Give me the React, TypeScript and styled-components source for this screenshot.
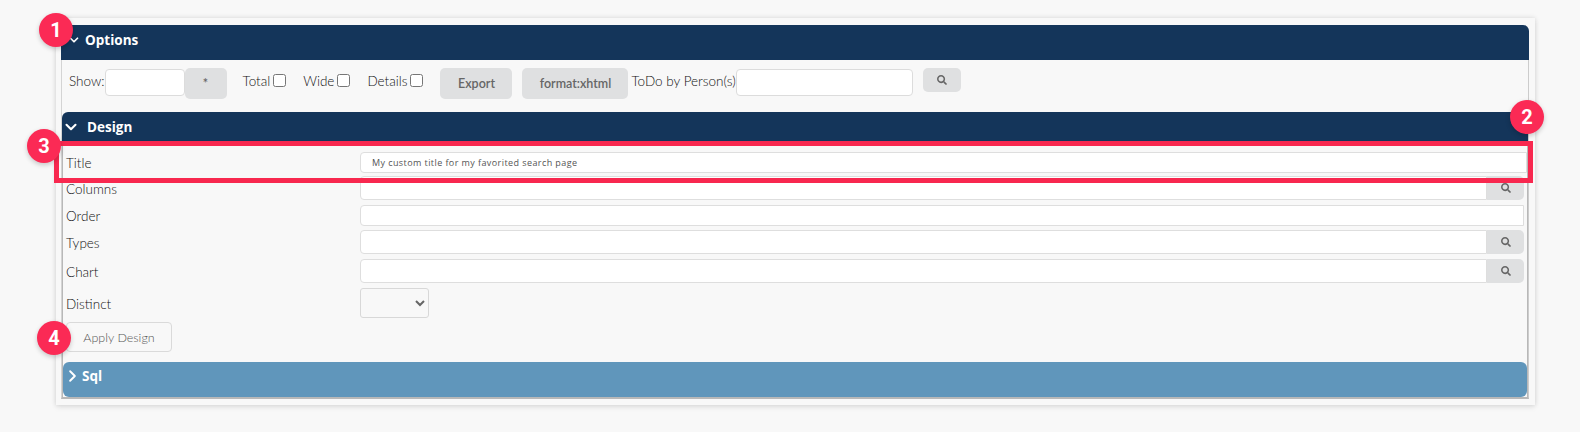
import { ChevronDown, ChevronRight } from "lucide-react";
import { FaSearch } from "react-icons/fa";
import styled, { createGlobalStyle } from "styled-components";

const GlobalStyle = createGlobalStyle`
  html, body {
    margin: 0;
    background: #f8f8f8;
  }
  * {
    box-sizing: border-box;
  }
`;

const Page = styled.div`
  position: relative;
  width: 1580px;
  height: 432px;
  padding: 18px 0 0 56px;
  overflow: hidden;
  background: #f8f8f8;
  font-family: Lato, "Liberation Sans", sans-serif;
  font-size: 13.5px;
  font-weight: 300;
  color: #111;
`;

const Card = styled.div`
  width: 1479px;
  height: 387px;
  padding: 7px 6px 0 5px;
  background: #f8f8f8;
  box-shadow: 0 0 5px rgba(0, 0, 0, 0.14), 0 3px 6px rgba(0, 0, 0, 0.05);
`;

const Header = styled.div<{ $radius: string; $height: number; $lift: number; $bg?: string }>`
  display: flex;
  align-items: center;
  height: ${(p) => p.$height}px;
  padding-bottom: ${(p) => p.$lift}px;
  background: ${(p) => p.$bg ?? "#14355a"};
  border-radius: ${(p) => p.$radius};
  color: #fff;
  font-family: "Open Sans", sans-serif;
  font-size: 13.5px;
  font-weight: 700;
`;

const HeaderIcon = styled.span<{ $left: number; $width: number }>`
  display: flex;
  margin-left: ${(p) => p.$left}px;
  width: ${(p) => p.$width}px;
`;

const OptionsPanel = styled.div`
  border-left: 1px solid #d4d4d4;
  border-right: 1px solid #ccc;
  border-bottom: 2px solid #b8b8b8;
  height: 339px;
`;

const Toolbar = styled.div`
  display: flex;
  align-items: flex-start;
  height: 52px;
  padding: 8px 0 0 7px;
`;

const ToolLabel = styled.label<{ $left?: number }>`
  display: flex;
  align-items: center;
  height: 27px;
  margin-left: ${(p) => p.$left ?? 0}px;
  white-space: nowrap;
  line-height: 27px;
`;

const ToolInput = styled.input<{ $width: number }>`
  width: ${(p) => p.$width}px;
  height: 27px;
  margin: 1px 0 0;
  padding: 0 8px;
  background: #fff;
  border: 1px solid #dcdcdc;
  border-radius: 4px;
`;

const Check = styled.input.attrs({ type: "checkbox" })`
  width: 13px;
  height: 13px;
  margin: -3px 0 0 3px;
`;

const GreyButton = styled.button<{ $width: number; $height?: number; $left?: number }>`
  display: flex;
  align-items: center;
  justify-content: center;
  width: ${(p) => p.$width}px;
  height: ${(p) => p.$height ?? 31}px;
  margin-left: ${(p) => p.$left ?? 0}px;
  padding: 0 0 1px;
  background: #dfe0e1;
  border: 0;
  border-radius: 5px;
  color: #666;
  font-family: Lato, sans-serif;
  font-size: 12.5px;
  font-weight: 600;
`;

const DesignBody = styled.div`
  border-left: 1px solid #b8b8b8;
  border-right: 1px solid #b8b8b8;
  padding-top: 6px;
`;

const FormRow = styled.div<{ $height: number; $top: number }>`
  display: grid;
  grid-template-columns: 297px 1fr;
  align-items: center;
  height: ${(p) => p.$height}px;
  margin-top: ${(p) => p.$top}px;
  padding-right: 3px;
`;

const FieldLabel = styled.div`
  padding: 1px 0 0 3px;
  line-height: 20px;
`;

const FieldGroup = styled.div`
  display: flex;
  height: 100%;
`;

const FieldInput = styled.input<{ $wide?: boolean }>`
  flex: 1;
  min-width: 0;
  height: 100%;
  margin-right: ${(p) => (p.$wide ? "-3px" : "0")};
  padding: 0 11px;
  background: #fff;
  border: 1px solid #dedede;
  border-radius: 4px 0 0 4px;
  color: #555;
  font-family: "Open Sans", sans-serif;
  font-size: 9px;
  letter-spacing: 0.42px;
`;

const SearchAddon = styled.button`
  display: flex;
  align-items: center;
  justify-content: center;
  width: 37px;
  height: 100%;
  padding: 0;
  background: #dfe0e1;
  border: 0;
  border-radius: 0 5px 5px 0;
  color: #666;
`;

const DistinctSelect = styled.select`
  width: 69px;
  height: 30px;
  background: #f8f8f8;
  border: 1px solid #d8d8d8;
  border-radius: 3px;
  color: #666;
`;

const ApplyButton = styled.button`
  display: block;
  width: 106px;
  height: 30px;
  margin: 4px 0 10px 3px;
  padding: 0;
  background: #f8f8f8;
  border: 1px solid #dadada;
  border-radius: 4px;
  color: #555;
  font-family: Lato, sans-serif;
  font-size: 12.5px;
  font-weight: 300;
`;

const RedFrame = styled.div`
  position: absolute;
  left: 54px;
  top: 141px;
  width: 1479px;
  height: 42px;
  border: 5px solid #f8284f;
  pointer-events: none;
`;

const Badge = styled.div<{ $x: number; $y: number }>`
  position: absolute;
  left: ${(p) => p.$x}px;
  top: ${(p) => p.$y}px;
  display: flex;
  align-items: center;
  justify-content: center;
  width: 34px;
  height: 34px;
  border-radius: 50%;
  background: #fb2a55;
  box-shadow: 0 2px 5px rgba(0, 0, 0, 0.2);
  color: #fff;
  font-family: Roboto, sans-serif;
  font-size: 20px;
  font-weight: 700;
`;

const badges = [
  { n: 1, x: 39, y: 13 },
  { n: 2, x: 1510, y: 100 },
  { n: 3, x: 27, y: 129 },
  { n: 4, x: 37, y: 321 },
];

export default function App() {
  return (
    <Page>
      <GlobalStyle />
      <Card>
        <Header $height={35} $lift={6} $radius="6px 6px 0 0">
          <HeaderIcon $left={6} $width={18}>
            <ChevronDown size={14} strokeWidth={3} />
          </HeaderIcon>
          Options
        </Header>
        <OptionsPanel>
          <Toolbar>
            <ToolLabel>Show:</ToolLabel>
            <ToolInput $width={80} />
            <GreyButton $width={42}>*</GreyButton>
            <ToolLabel $left={16}>
              Total
              <Check />
            </ToolLabel>
            <ToolLabel $left={17}>
              Wide
              <Check />
            </ToolLabel>
            <ToolLabel $left={17}>
              Details
              <Check />
            </ToolLabel>
            <GreyButton $width={72} $left={17}>
              Export
            </GreyButton>
            <GreyButton $width={106} $left={10}>
              format:xhtml
            </GreyButton>
            <ToolLabel $left={3}>ToDo by Person(s)</ToolLabel>
            <ToolInput $width={177} />
            <GreyButton $width={38} $height={24} $left={10}>
              <FaSearch size={10} />
            </GreyButton>
          </Toolbar>
          <Header $height={34} $lift={4} $radius="6px 6px 0 0">
            <HeaderIcon $left={0} $width={25}>
              <ChevronDown size={18} strokeWidth={2.8} />
            </HeaderIcon>
            Design
          </Header>
          <DesignBody>
            <FormRow $height={20} $top={0}>
              <FieldLabel>Title</FieldLabel>
              <FieldGroup>
                <FieldInput $wide defaultValue="My custom title for my favorited search page" />
              </FieldGroup>
            </FormRow>
            <FormRow $height={24} $top={4}>
              <FieldLabel>Columns</FieldLabel>
              <FieldGroup>
                <FieldInput />
                <SearchAddon>
                  <FaSearch size={10} />
                </SearchAddon>
              </FieldGroup>
            </FormRow>
            <FormRow $height={21} $top={5}>
              <FieldLabel>Order</FieldLabel>
              <FieldGroup>
                <FieldInput />
              </FieldGroup>
            </FormRow>
            <FormRow $height={24} $top={4}>
              <FieldLabel>Types</FieldLabel>
              <FieldGroup>
                <FieldInput />
                <SearchAddon>
                  <FaSearch size={10} />
                </SearchAddon>
              </FieldGroup>
            </FormRow>
            <FormRow $height={24} $top={5}>
              <FieldLabel>Chart</FieldLabel>
              <FieldGroup>
                <FieldInput />
                <SearchAddon>
                  <FaSearch size={10} />
                </SearchAddon>
              </FieldGroup>
            </FormRow>
            <FormRow $height={30} $top={5}>
              <FieldLabel>Distinct</FieldLabel>
              <div>
                <DistinctSelect />
              </div>
            </FormRow>
            <ApplyButton>Apply Design</ApplyButton>
            <Header $height={35} $lift={8} $radius="6px" $bg="#6096bb">
              <HeaderIcon $left={0} $width={19}>
                <ChevronRight size={20} strokeWidth={2.4} />
              </HeaderIcon>
              Sql
            </Header>
          </DesignBody>
        </OptionsPanel>
      </Card>
      <RedFrame />
      {badges.map((b) => (
        <Badge key={b.n} $x={b.x} $y={b.y}>
          {b.n}
        </Badge>
      ))}
    </Page>
  );
}
